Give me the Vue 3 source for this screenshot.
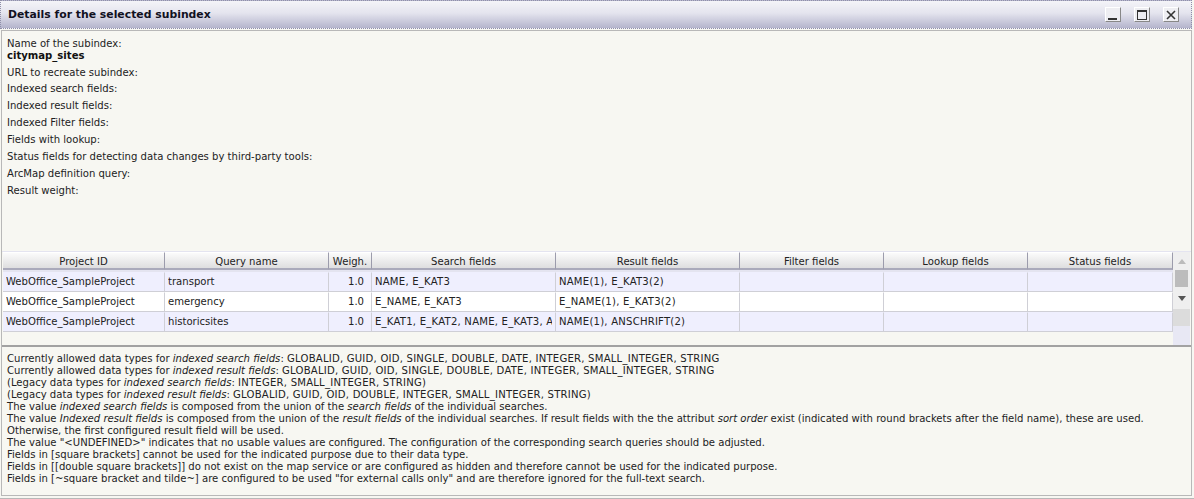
<script setup>
const cols = [
  { t: 'Project ID', w: 162 },
  { t: 'Query name', w: 164 },
  { t: 'Weigh.', w: 43 },
  { t: 'Search fields', w: 184 },
  { t: 'Result fields', w: 184 },
  { t: 'Filter fields', w: 144 },
  { t: 'Lookup fields', w: 144 },
  { t: 'Status fields', w: 145 }
]
const rows = [
  ['WebOffice_SampleProject', 'transport', '1.0', 'NAME, E_KAT3', 'NAME(1), E_KAT3(2)', '', '', ''],
  ['WebOffice_SampleProject', 'emergency', '1.0', 'E_NAME, E_KAT3', 'E_NAME(1), E_KAT3(2)', '', '', ''],
  ['WebOffice_SampleProject', 'historicsites', '1.0', 'E_KAT1, E_KAT2, NAME, E_KAT3, ANSCHRIFT', 'NAME(1), ANSCHRIFT(2)', '', '', '']
]
const labels = [
  'URL to recreate subindex:',
  'Indexed search fields:',
  'Indexed result fields:',
  'Indexed Filter fields:',
  'Fields with lookup:',
  'Status fields for detecting data changes by third-party tools:',
  'ArcMap definition query:',
  'Result weight:'
]
</script>

<template>
  <div class="window">
    <header class="titlebar">
      <h1 class="title">Details for the selected subindex</h1>
      <div class="buttons">
        <button class="wbtn"><svg width="14" height="14" viewBox="0 0 14 14"><rect x="2" y="10" width="9" height="2" fill="#333"/></svg></button>
        <button class="wbtn"><svg width="14" height="14" viewBox="0 0 14 14"><rect x="2.5" y="2.5" width="9" height="9" fill="none" stroke="#333"/><rect x="2" y="2" width="10" height="2" fill="#333"/></svg></button>
        <button class="wbtn"><svg width="14" height="14" viewBox="0 0 14 14"><path d="M3 3l8 8M11 3l-8 8" stroke="#333" stroke-width="1.6" fill="none"/></svg></button>
      </div>
    </header>
    <main class="panel">
      <section class="info">
        <div class="name-block">
          <div>Name of the subindex:</div>
          <strong>citymap_sites</strong>
        </div>
        <div v-for="l in labels" :key="l" class="label">{{ l }}</div>
      </section>
      <section class="gridwrap">
        <div class="grid">
          <div class="ghead">
            <div v-for="c in cols" :key="c.t" class="hcell" :style="{ width: c.w + 'px' }">{{ c.t }}</div>
          </div>
          <div v-for="(r, i) in rows" :key="i" class="grow" :class="{ alt: i !== 1 }">
            <div v-for="(v, j) in r" :key="j" class="cell" :class="{ num: j === 2, caps: j === 3 || j === 4 }" :style="{ width: cols[j].w + 'px' }"><div class="clip">{{ v }}</div></div>
          </div>
        </div>
        <div class="scroll">
          <div class="scroll-box">
            <svg class="arrow" width="8" height="5" viewBox="0 0 8 5"><path d="M4 0l4 5H0z" fill="#bbb"/></svg>
            <div class="thumb"></div>
            <svg class="arrow down" width="8" height="5" viewBox="0 0 8 5"><path d="M0 0h8L4 5z" fill="#555"/></svg>
          </div>
          <div class="scroll-end"></div>
        </div>
      </section>
      <section class="notes">
        <div>Currently allowed data types for <em>indexed search fields</em>: <span class="caps">GLOBALID, GUID, OID, SINGLE, DOUBLE, DATE, INTEGER, SMALL_INTEGER, STRING</span></div>
        <div>Currently allowed data types for <em>indexed result fields</em>: <span class="caps">GLOBALID, GUID, OID, SINGLE, DOUBLE, DATE, INTEGER, SMALL_INTEGER, STRING</span></div>
        <div>(Legacy data types for <em>indexed search fields</em>: <span class="caps">INTEGER, SMALL_INTEGER, STRING</span>)</div>
        <div>(Legacy data types for <em>indexed result fields</em>: <span class="caps">GLOBALID, GUID, OID, DOUBLE, INTEGER, SMALL_INTEGER, STRING</span>)</div>
        <div>The value <em>indexed search fields</em> is composed from the union of the <em>search fields</em> of the individual searches.</div>
        <div>The value <em>Indexed result fields</em> is composed from the union of the <em>result fields</em> of the individual searches. If result fields with the the attribut <em>sort order</em> exist (indicated with round brackets after the field name), these are used.</div>
        <div>Otherwise, the first configured result field will be used.</div>
        <div>The value "&lt;UNDEFINED&gt;" indicates that no usable values are configured. The configuration of the corresponding search queries should be adjusted.</div>
        <div>Fields in [square brackets] cannot be used for the indicated purpose due to their data type.</div>
        <div>Fields in [[double square brackets]] do not exist on the map service or are configured as hidden and therefore cannot be used for the indicated purpose.</div>
        <div>Fields in [~square bracket and tilde~] are configured to be used "for external calls only" and are therefore ignored for the full-text search.</div>
      </section>
    </main>
  </div>
</template>

<style>
html, body { margin: 0; background: #f7f7f2; overflow: hidden; }
</style>

<style scoped>
.window {
  width: 1194px;
  height: 499px;
  box-sizing: border-box;
  padding-right: 2px;
  display: flex;
  flex-direction: column;
  font-family: "DejaVu Sans", Verdana, sans-serif;
  font-size: 10.08px;
  line-height: 12px;
  color: #222;
  background: #f7f7f2;
  border-bottom: 1px solid #b8b8b8;
}
.caps { letter-spacing: 0.22px; }
.titlebar {
  height: 29px;
  flex: none;
  box-sizing: border-box;
  border: 1px dotted #8f8fa8;
  background: linear-gradient(#f4f4f8, #e4e4ee 45%, #b4b4cc);
  display: flex;
  align-items: center;
  justify-content: space-between;
  padding: 0 10px 0 7px;
  width: 1192px;
}
.title {
  margin: 0;
  font-size: 10.85px;
  font-weight: bold;
  color: #11111f;
}
.buttons { display: flex; gap: 13px; margin-right: 2px; }
.wbtn {
  width: 16px;
  height: 15px;
  padding: 0;
  box-sizing: border-box;
  background: #eeeef2;
  border: 1px solid;
  border-color: #fff #888 #888 #fff;
  display: flex;
  align-items: center;
  justify-content: center;
}
.panel {
  flex: 1;
  margin: 1px 0 2px 1px;
  border: 1px solid #b8b8b8;
  background: #f7f7f2;
  display: flex;
  flex-direction: column;
  min-height: 0;
}
.info {
  height: 220px;
  flex: none;
  box-sizing: border-box;
  padding: 7px 0 0 5px;
}
.name-block { margin-bottom: 5px; }
.name-block strong { color: #111; }
.label { margin-bottom: 5px; }
.label:nth-child(2) { margin-bottom: 4px; }
.gridwrap {
  height: 96px;
  flex: none;
  box-sizing: border-box;
  display: flex;
  background: #f7f7f2;
  border-top: 1px solid #e4e4f0;
  border-bottom: 2px solid #a2a2a2;
}
.grid { flex: none; width: 1170px; margin-left: 1px; }
.ghead { display: flex; height: 20px; background: #e4e4f0; }
.hcell {
  box-sizing: border-box;
  flex: none;
  height: 18px;
  text-align: center;
  line-height: 17px;
  color: #222;
  background: linear-gradient(#fbfbfb, #dededf);
  border-right: 1px solid #9c9cac;
  border-bottom: 2px solid #aaaabb;
  border-top: 1px solid #fff;
}
.grow { display: flex; height: 20px; background: #fff; }
.grow.alt { background: #efeffe; }
.cell {
  box-sizing: border-box;
  flex: none;
  padding: 0 3px;
  line-height: 18px;
  border-right: 1px solid #cfcfd6;
  border-bottom: 1px solid #cfcfd6;
  border-top: 1px solid transparent;
}
.clip { white-space: nowrap; overflow: hidden; height: 18px; }
.cell.num { text-align: right; padding-right: 7px; }
.scroll {
  flex: none;
  width: 17px;
  background: #e8e8f4;
  display: flex;
  flex-direction: column;
}
.scroll-box {
  height: 57px;
  background: #efefef;
  display: flex;
  flex-direction: column;
  align-items: center;
}
.arrow { margin-top: 7px; flex: none; }
.arrow.down { margin-top: 9px; }
.thumb { width: 13px; height: 17px; margin-top: 6px; background: #bcbcbc; flex: none; }
.scroll-end { height: 17px; background: #dcdcdc; }
.notes { flex: 1; padding: 6px 0 0 5px; min-width: 0; white-space: nowrap; }
</style>
